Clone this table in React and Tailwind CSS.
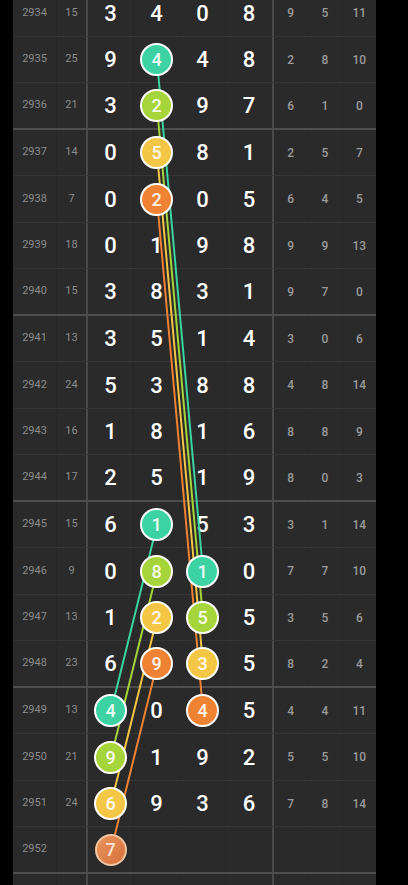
import clsx from 'clsx'

// ── Trend data ────────────────────────────────────────────────────────────────
const ROWS = [
  { p: 2934, s: 15, d: [3, 4, 0, 8], r: [9, 5, 11] },
  { p: 2935, s: 25, d: [9, 4, 4, 8], r: [2, 8, 10], hit: { 1: 'teal' } },
  { p: 2936, s: 21, d: [3, 2, 9, 7], r: [6, 1, 0], hit: { 1: 'lime' } },
  { p: 2937, s: 14, d: [0, 5, 8, 1], r: [2, 5, 7], hit: { 1: 'yellow' } },
  { p: 2938, s: 7, d: [0, 2, 0, 5], r: [6, 4, 5], hit: { 1: 'orange' } },
  { p: 2939, s: 18, d: [0, 1, 9, 8], r: [9, 9, 13] },
  { p: 2940, s: 15, d: [3, 8, 3, 1], r: [9, 7, 0] },
  { p: 2941, s: 13, d: [3, 5, 1, 4], r: [3, 0, 6] },
  { p: 2942, s: 24, d: [5, 3, 8, 8], r: [4, 8, 14] },
  { p: 2943, s: 16, d: [1, 8, 1, 6], r: [8, 8, 9] },
  { p: 2944, s: 17, d: [2, 5, 1, 9], r: [8, 0, 3] },
  { p: 2945, s: 15, d: [6, 1, 5, 3], r: [3, 1, 14], hit: { 1: 'teal' } },
  { p: 2946, s: 9, d: [0, 8, 1, 0], r: [7, 7, 10], hit: { 1: 'lime', 2: 'teal' } },
  { p: 2947, s: 13, d: [1, 2, 5, 5], r: [3, 5, 6], hit: { 1: 'yellow', 2: 'lime' } },
  { p: 2948, s: 23, d: [6, 9, 3, 5], r: [8, 2, 4], hit: { 1: 'orange', 2: 'yellow' } },
  { p: 2949, s: 13, d: [4, 0, 4, 5], r: [4, 4, 11], hit: { 0: 'teal', 2: 'orange' } },
  { p: 2950, s: 21, d: [9, 1, 9, 2], r: [5, 5, 10], hit: { 0: 'lime' } },
  { p: 2951, s: 24, d: [6, 9, 3, 6], r: [7, 8, 14], hit: { 0: 'yellow' } },
  { p: 2952, s: '', d: [7, '', '', ''], r: ['', '', ''], hit: { 0: 'next' } },
  { p: null, s: '', d: ['', '', '', ''], r: ['', '', ''] },
]

const COLORS = {
  teal: '#3cd2a2',
  lime: '#a6d43b',
  yellow: '#f4c646',
  orange: '#ef8233',
}

const BALL_BG = {
  teal: 'bg-[#3cd2a2]',
  lime: 'bg-[#a6d43b]',
  yellow: 'bg-[#f4c646]',
  orange: 'bg-[#ef8233]',
}

// [from period, col, to period, col, colour]
const LINKS = [
  [2935, 1, 2946, 2, 'teal'],
  [2936, 1, 2947, 2, 'lime'],
  [2937, 1, 2948, 2, 'yellow'],
  [2938, 1, 2949, 2, 'orange'],
  [2945, 1, 2949, 0, 'teal'],
  [2946, 1, 2950, 0, 'lime'],
  [2947, 1, 2951, 0, 'yellow'],
  [2948, 1, 2952, 0, 'orange'],
]

const FONT = { fontFamily: 'Roboto, "Noto Sans", sans-serif' }

function Ball({ n, tone }) {
  if (tone === 'next') {
    return (
      <div className="relative z-10 w-[32px] h-[32px] rounded-full border-2 border-[#f1c6a4] bg-gradient-to-br from-[#e9955e] to-[#d6703a] flex items-center justify-center text-[18px] text-[#f6e3d6]">
        {n}
      </div>
    )
  }
  return (
    <div className={clsx(
      'relative z-10 w-[33px] h-[33px] rounded-full border-2 border-white flex items-center justify-center text-[18px] text-white/90',
      BALL_BG[tone]
    )}>
      {n}
    </div>
  )
}

function Row({ row, tall, end }) {
  return (
    <div className={clsx(
      'flex bg-[#2a2a2a]',
      tall ? 'h-[47px]' : 'h-[46px]',
      end ? 'border-b-2 border-[#4e4e4e]' : 'border-b border-[#353535]'
    )}>
      <div className="w-[44px] flex items-center justify-center text-[11px] text-[#8c8c8c] border-r border-[#262626]">
        {row.p}
      </div>
      <div className="w-[31px] flex items-center justify-center text-[11px] text-[#8c8c8c] border-r-2 border-[#4a4a4a]">
        {row.s}
      </div>
      {row.d.map((n, i) => (
        <div key={i} className={clsx(
          'w-[46px] flex items-center justify-center text-[22px] font-medium text-white',
          i < 3 && 'border-r border-[#262626]'
        )}>
          {row.hit?.[i] ? <Ball n={n} tone={row.hit[i]} /> : n}
        </div>
      ))}
      <div className="flex-1 flex border-l-2 border-[#4a4a4a]">
        {row.r.map((n, i) => (
          <div key={i} className={clsx(
            'flex-1 flex items-center justify-center text-[12px] font-medium text-[#9a9a9a]',
            i < 2 && 'border-r border-[#262626]'
          )}>
            {n}
          </div>
        ))}
      </div>
    </div>
  )
}

export default function App() {
  // row geometry (page coords) – alternate 46/47 px, group of 4 periods
  let top = -10
  const geo = ROWS.map((row) => {
    const p = row.p ?? 2953
    const pos = (p - 2933) % 4
    const tall = pos % 2 === 1
    const h = tall ? 47 : 46
    const g = { tall, end: pos === 3, mid: top + h / 2 }
    top += h
    return g
  })
  const yOf = (p) => geo[ROWS.findIndex((r) => r.p === p)].mid
  const xOf = (c) => 111 + 46 * c

  return (
    <div className="relative w-[408px] h-[885px] bg-black overflow-hidden" style={FONT}>
      <div className="ml-[13px] w-[363px] mt-[-10px] flex flex-col">
        {ROWS.map((row, i) => (
          <Row key={i} row={row} tall={geo[i].tall} end={geo[i].end} />
        ))}
      </div>

      {/* trend lines */}
      <svg className="absolute top-0 left-0 pointer-events-none" width="408" height="885">
        {LINKS.map(([a, ca, b, cb, tone], i) => (
          <line key={i}
            x1={xOf(ca)} y1={yOf(a)} x2={xOf(cb)} y2={yOf(b)}
            stroke={COLORS[tone]} strokeWidth="2" strokeLinecap="round" />
        ))}
      </svg>
    </div>
  )
}
